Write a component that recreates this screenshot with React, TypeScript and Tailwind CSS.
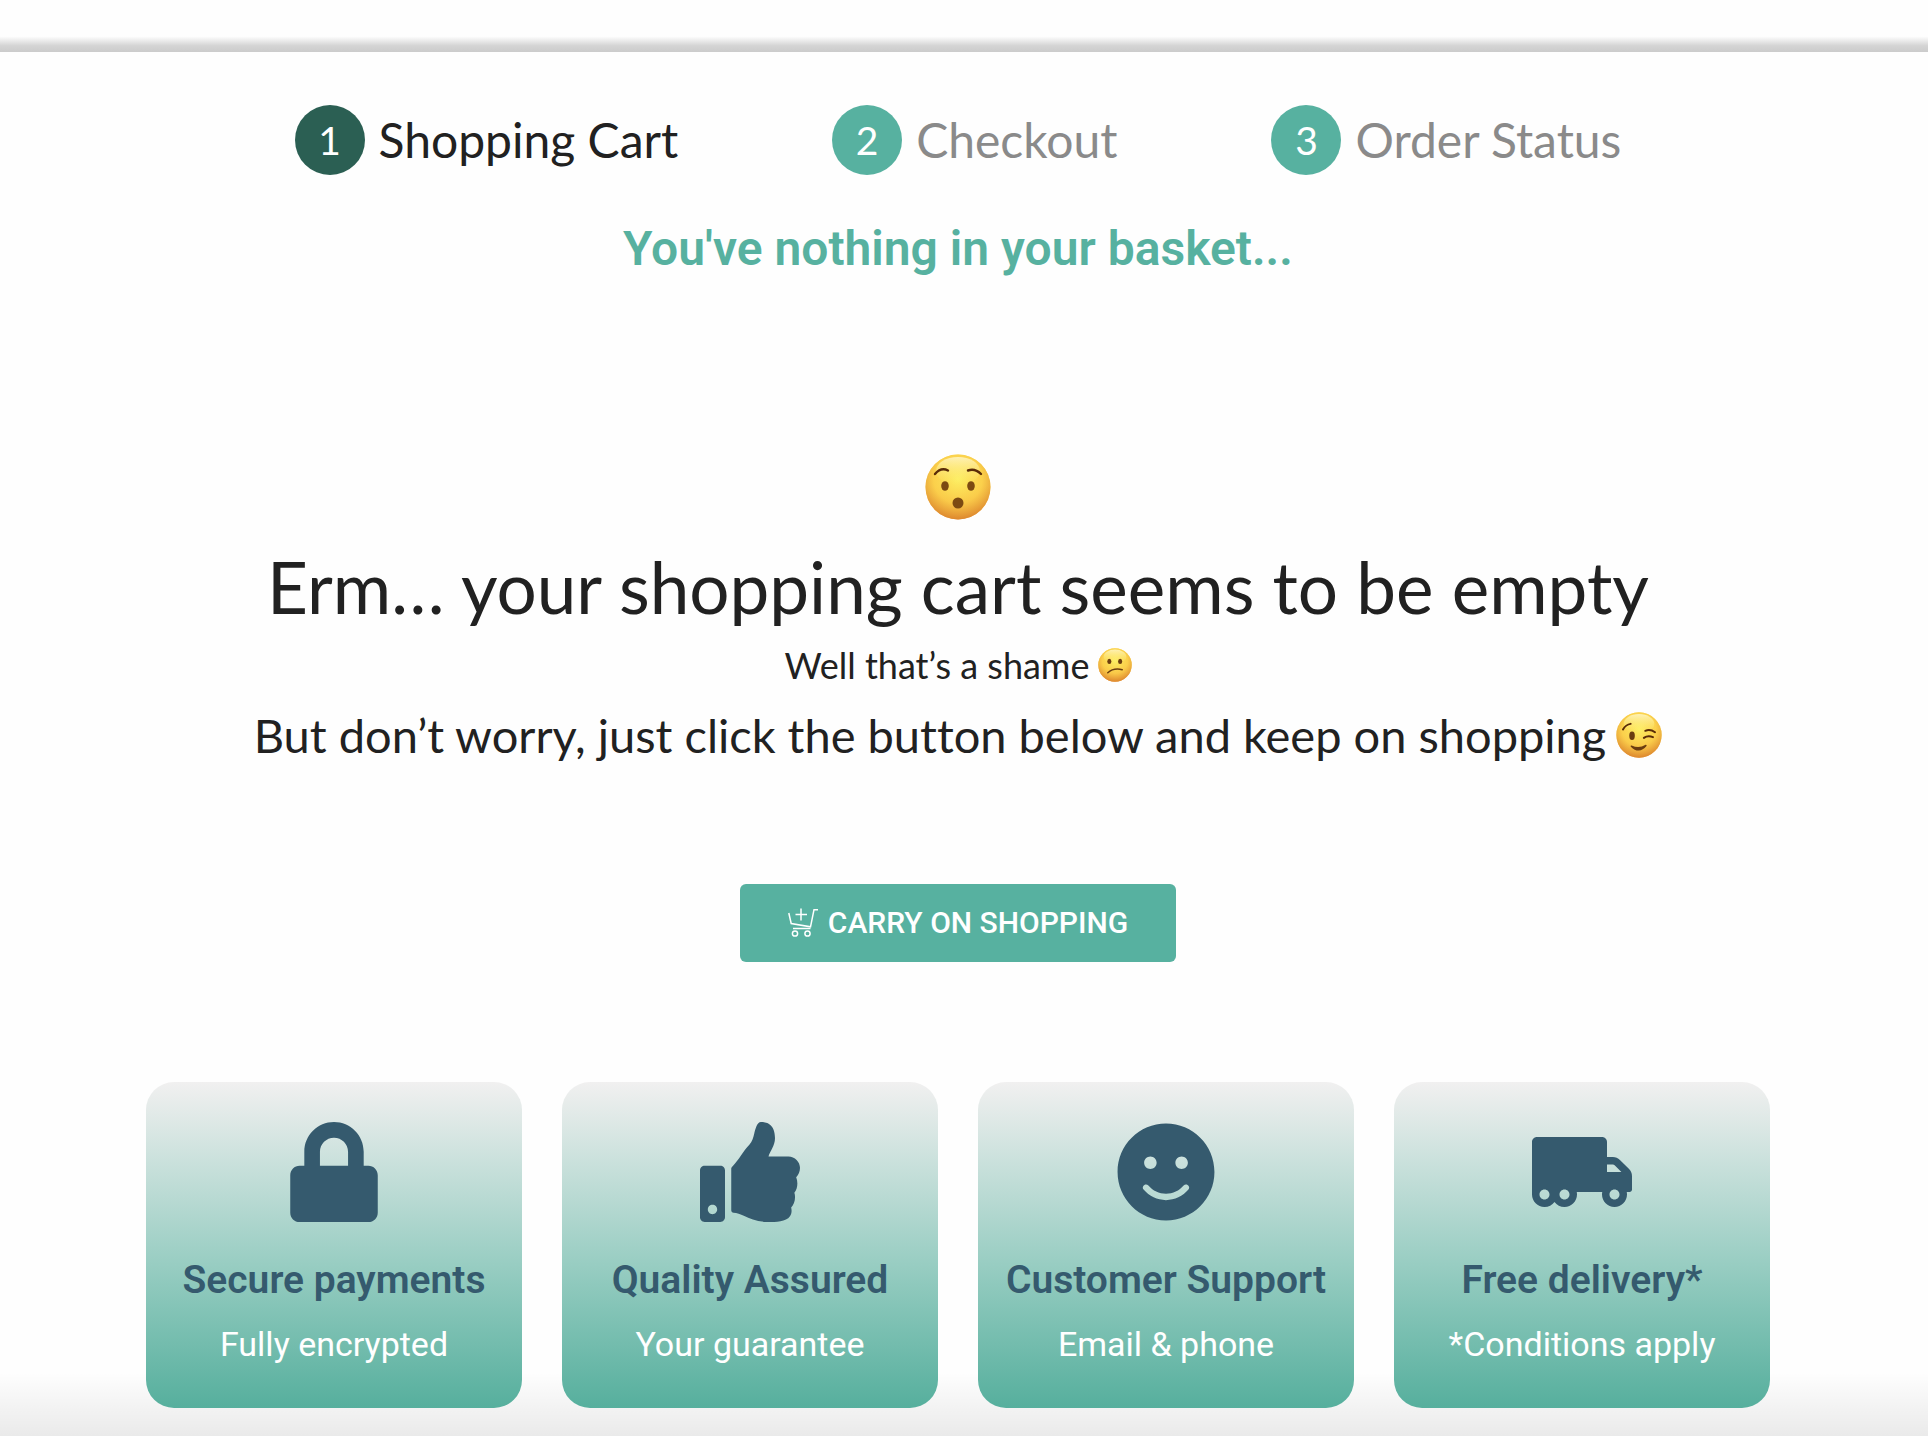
import React from 'react';
import { FaLock, FaThumbsUp, FaSmile, FaTruckMoving } from 'react-icons/fa';

const steps = [
  { number: 1, label: 'Shopping Cart', active: true },
  { number: 2, label: 'Checkout', active: false },
  { number: 3, label: 'Order Status', active: false },
];

const features = [
  { icon: FaLock, title: 'Secure payments', text: 'Fully encrypted' },
  { icon: FaThumbsUp, title: 'Quality Assured', text: 'Your guarantee' },
  { icon: FaSmile, title: 'Customer Support', text: 'Email & phone' },
  { icon: FaTruckMoving, title: 'Free delivery*', text: '*Conditions apply' },
];

type EmojiProps = {
  id: string;
  label: string;
  className: string;
  children: React.ReactNode;
};

// Round yellow face, the features are passed as children
const Emoji = ({ id, label, className, children }: EmojiProps) => (
  <svg viewBox="0 0 66 66" role="img" aria-label={label} className={className}>
    <defs>
      <linearGradient id={`${id}-base`} x1="0" y1="0" x2="0" y2="1">
        <stop offset="0" stopColor="#fbd84e" />
        <stop offset="0.5" stopColor="#fbd04a" />
        <stop offset="1" stopColor="#ee9a35" />
      </linearGradient>
      <radialGradient id={`${id}-edge`} cx="0.5" cy="0.38" r="0.62">
        <stop offset="0" stopColor="#fdee62" />
        <stop offset="0.6" stopColor="#fbd04c" stopOpacity="0.7" />
        <stop offset="1" stopColor="#d9822c" stopOpacity="0.8" />
      </radialGradient>
      <linearGradient id={`${id}-shine`} x1="0" y1="0" x2="0" y2="1">
        <stop offset="0" stopColor="#fffbd8" stopOpacity="0.75" />
        <stop offset="1" stopColor="#fff36a" stopOpacity="0" />
      </linearGradient>
    </defs>
    <circle cx="33" cy="33" r="32.5" fill={`url(#${id}-base)`} />
    <circle cx="33" cy="33" r="32.5" fill={`url(#${id}-edge)`} />
    <ellipse cx="33" cy="17" rx="22" ry="14" fill={`url(#${id}-shine)`} />
    {children}
  </svg>
);

const CartPlusIcon = () => (
  <svg viewBox="0 0 30 30" fill="none" stroke="currentColor" strokeWidth="1.5" className="w-[30px] h-[30px]" aria-hidden="true">
    <path d="M0.800 5l2.400 10.500L22.500 18.800 26 1.700h4" />
    <path d="M5 20.500h17.500" />
    <path d="M13 0.500v12M7.500 6.500h11.500" />
    <circle cx="7" cy="25.500" r="2.600" />
    <circle cx="19.500" cy="25.500" r="2.600" />
  </svg>
);

const App = () => {
  return (
    <div className="relative min-h-screen bg-[#fefefe] font-[Lato,sans-serif] text-[#212121] [font-variant-ligatures:none]">
      <header className="h-[52px] bg-linear-to-b from-[#fefefe] from-70% via-[#d4d4d4] via-88% to-[#cbcbcb]" />

      {/* Fade along the bottom edge of the page */}
      <div className="pointer-events-none absolute inset-x-0 bottom-0 h-16 bg-linear-to-b from-transparent to-black/8" />

      <main className="relative flex flex-col items-center pt-[53px] pr-3 pb-7">
        <ol className="flex gap-[154px]">
          {steps.map((step) => (
            <li key={step.number} className="flex items-center gap-[14px]">
              <span
                className={`flex size-[70px] items-center justify-center rounded-full text-[39px] text-white ${
                  step.active ? 'bg-[#2b5f53]' : 'bg-[#57b1a0]'
                }`}
              >
                {step.number}
              </span>
              <span className={`text-5xl ${step.active ? '' : 'text-[#8a8a8a]'}`}>{step.label}</span>
            </li>
          ))}
        </ol>

        <h2 className="mt-[46px] font-[Roboto,sans-serif] text-5xl leading-[56px] font-semibold text-[#57b1a0]">
          You've nothing in your basket...
        </h2>

        <Emoji id="hushed" label="Hushed face" className="mt-[177px] size-[66px]">
          <path d="M10 20Q16 13 23 16.500M43 16.500Q50 14 56 20" fill="none" stroke="#5a2b08" strokeWidth="2.400" strokeLinecap="round" />
          <ellipse cx="20" cy="32" rx="3.800" ry="4.800" fill="#7c4a12" />
          <ellipse cx="46" cy="32" rx="3.800" ry="4.800" fill="#7c4a12" />
          <circle cx="33" cy="49" r="5.500" fill="#7c4a12" />
        </Emoji>

        <h1 className="mt-[22px] text-[71px] leading-[90px]">Erm… your shopping cart seems to be empty</h1>
        <p className="mt-[9px] flex items-center gap-2 text-4xl leading-[48px]">
          Well that’s a shame
          <Emoji id="confused" label="Confused face" className="size-[34px]">
            <ellipse cx="22" cy="26" rx="4" ry="5" fill="#6b3d10" />
            <ellipse cx="43" cy="26" rx="4" ry="5" fill="#6b3d10" />
            <path d="M19 48Q30 38 47 42" fill="none" stroke="#6b3d10" strokeWidth="3" strokeLinecap="round" />
          </Emoji>
        </p>
        <p className="mt-4 flex items-center gap-[10px] text-[47px] leading-[60px]">
          But don’t worry, just click the button below and keep on shopping
          <Emoji id="wink" label="Winking face" className="size-[46px]">
            <path d="M10 25Q14 18 21 17M42 27Q49 24 56 29" fill="none" stroke="#5a2b08" strokeWidth="2.800" strokeLinecap="round" />
            <ellipse cx="23" cy="34" rx="4" ry="6" fill="#6b3d10" />
            <path d="M40 37Q46 33 53 36" fill="none" stroke="#5a2b08" strokeWidth="3" strokeLinecap="round" />
            <path d="M22 49Q33 60 43 48Q33 54 22 49Z" fill="#6b3d10" stroke="#6b3d10" strokeWidth="2" strokeLinejoin="round" />
          </Emoji>
        </p>

        <button
          type="button"
          className="mt-[119px] flex h-[78px] items-center gap-[10px] rounded-md bg-[#57b1a0] px-12 font-[Roboto,sans-serif] text-3xl font-medium text-white uppercase"
        >
          <CartPlusIcon />
          Carry on shopping
        </button>

        <section className="mt-[120px] grid w-full max-w-[1624px] grid-cols-4 gap-10 font-[Roboto,sans-serif]">
          {features.map(({ icon: Icon, title, text }) => (
            <article
              key={title}
              className="flex flex-col items-center rounded-[28px] bg-linear-to-b/srgb from-[#f1f0f0] via-[#98cdc2] via-56% to-[#56af9d] pt-10 pb-11 text-center"
            >
              <Icon className="size-[100px] text-[#355a6e]" />
              <h3 className="mt-[34px] text-[39px] leading-[48px] font-semibold text-[#355a6e]">{title}</h3>
              <p className="mt-5 text-[34px] leading-10 text-white">{text}</p>
            </article>
          ))}
        </section>
      </main>
    </div>
  );
};

export default App;
